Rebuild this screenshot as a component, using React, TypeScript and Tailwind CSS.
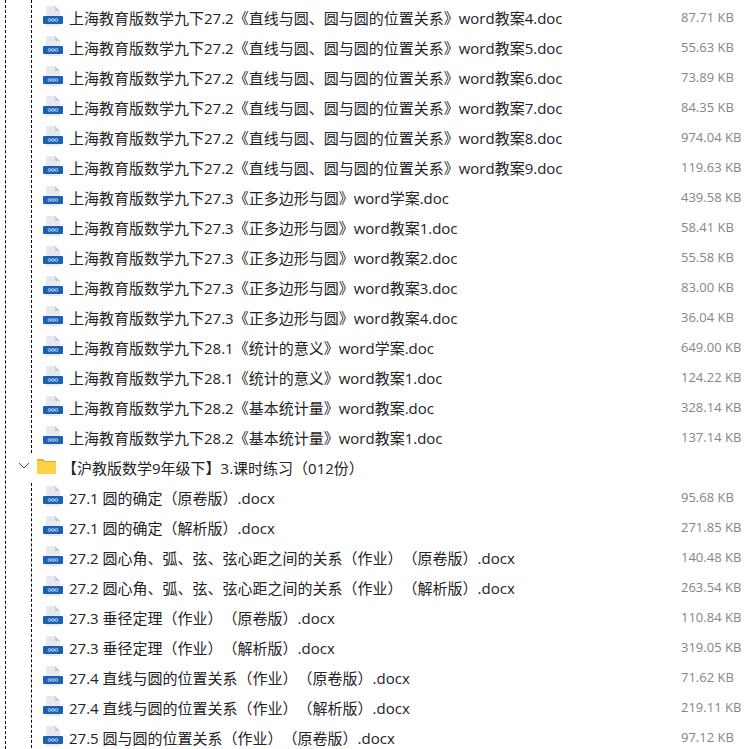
const font = { fontFamily: '"Open Sans", "Noto Sans CJK SC", sans-serif' };

type Row = [string, string];

const group1: Row[] = [
  ["上海教育版数学九下27.2《直线与圆、圆与圆的位置关系》word教案4.doc", "87.71 KB"],
  ["上海教育版数学九下27.2《直线与圆、圆与圆的位置关系》word教案5.doc", "55.63 KB"],
  ["上海教育版数学九下27.2《直线与圆、圆与圆的位置关系》word教案6.doc", "73.89 KB"],
  ["上海教育版数学九下27.2《直线与圆、圆与圆的位置关系》word教案7.doc", "84.35 KB"],
  ["上海教育版数学九下27.2《直线与圆、圆与圆的位置关系》word教案8.doc", "974.04 KB"],
  ["上海教育版数学九下27.2《直线与圆、圆与圆的位置关系》word教案9.doc", "119.63 KB"],
  ["上海教育版数学九下27.3《正多边形与圆》word学案.doc", "439.58 KB"],
  ["上海教育版数学九下27.3《正多边形与圆》word教案1.doc", "58.41 KB"],
  ["上海教育版数学九下27.3《正多边形与圆》word教案2.doc", "55.58 KB"],
  ["上海教育版数学九下27.3《正多边形与圆》word教案3.doc", "83.00 KB"],
  ["上海教育版数学九下27.3《正多边形与圆》word教案4.doc", "36.04 KB"],
  ["上海教育版数学九下28.1《统计的意义》word学案.doc", "649.00 KB"],
  ["上海教育版数学九下28.1《统计的意义》word教案1.doc", "124.22 KB"],
  ["上海教育版数学九下28.2《基本统计量》word教案.doc", "328.14 KB"],
  ["上海教育版数学九下28.2《基本统计量》word教案1.doc", "137.14 KB"],
];

const group2: Row[] = [
  ["27.1 圆的确定（原卷版）.docx", "95.68 KB"],
  ["27.1 圆的确定（解析版）.docx", "271.85 KB"],
  ["27.2 圆心角、弧、弦、弦心距之间的关系（作业）（原卷版）.docx", "140.48 KB"],
  ["27.2 圆心角、弧、弦、弦心距之间的关系（作业）（解析版）.docx", "263.54 KB"],
  ["27.3 垂径定理（作业）（原卷版）.docx", "110.84 KB"],
  ["27.3 垂径定理（作业）（解析版）.docx", "319.05 KB"],
  ["27.4 直线与圆的位置关系（作业）（原卷版）.docx", "71.62 KB"],
  ["27.4 直线与圆的位置关系（作业）（解析版）.docx", "219.11 KB"],
  ["27.5 圆与圆的位置关系（作业）（原卷版）.docx", "97.12 KB"],
];

function DocIcon() {
  return (
    <svg width="20" height="20" viewBox="0 0 20 20" className="shrink-0">
      <path d="M3 0h9l5 5v15H3z" fill="#e6e9f0" />
      <path d="M12 0l5 5h-5z" fill="#c4c8d2" />
      <rect x="0" y="10" width="20" height="8" rx="1" fill="#1c60b6" />
      <circle cx="6.5" cy="14" r="1.4" fill="none" stroke="#dbe7f7" strokeWidth="0.8" />
      <circle cx="10" cy="14" r="1.4" fill="none" stroke="#dbe7f7" strokeWidth="0.8" />
      <circle cx="13.5" cy="14" r="1.4" fill="none" stroke="#dbe7f7" strokeWidth="0.8" />
    </svg>
  );
}

function FolderIcon() {
  return (
    <svg width="19" height="15" viewBox="0 0 19 15" className="shrink-0">
      <path d="M0 1a1 1 0 0 1 1-1h5l2 2h10a1 1 0 0 1 1 1v11a1 1 0 0 1-1 1H1a1 1 0 0 1-1-1z" fill="#fbd23f" />
      <path d="M0 1a1 1 0 0 1 1-1h5l2 2h11v1H7.5L6 2H0z" fill="#e8a92c" />
    </svg>
  );
}

function FileRow({ row }: { row: Row }) {
  return (
    <div className="flex h-[30px] items-center">
      <div className="ml-[11px] -mt-1 flex w-[26px] shrink-0">
        <DocIcon />
      </div>
      <span className="flex-1 truncate text-[15px] text-[#222226] [text-spacing-trim:space-all]">{row[0]}</span>
      <span className="w-[65px] text-[13px] text-[#85858c]">{row[1]}</span>
    </div>
  );
}

export default function App() {
  return (
    <div className="h-[749px] w-[746px] overflow-hidden bg-white" style={font}>
      <div className="ml-[5px] h-full border-l border-dashed border-black">
        <div className="ml-[25px] border-l border-dashed border-black pt-[3px]">
          {group1.map((row) => (
            <FileRow key={row[0]} row={row} />
          ))}
        </div>
        <div className="flex h-[30px] items-center">
          <svg width="12" height="8" viewBox="0 0 12 8" className="ml-[12px] -mt-1 shrink-0">
            <path d="M1 1l5 5 5-5" fill="none" stroke="#555" strokeWidth="1" />
          </svg>
          <div className="ml-[7px] -mt-1 flex w-[25px] shrink-0">
            <FolderIcon />
          </div>
          <span className="text-[15px] text-[#222226] [text-spacing-trim:space-all]">【沪教版数学9年级下】3.课时练习（012份）</span>
        </div>
        <div className="ml-[25px] border-l border-dashed border-black">
          {group2.map((row) => (
            <FileRow key={row[0]} row={row} />
          ))}
        </div>
      </div>
    </div>
  );
}
